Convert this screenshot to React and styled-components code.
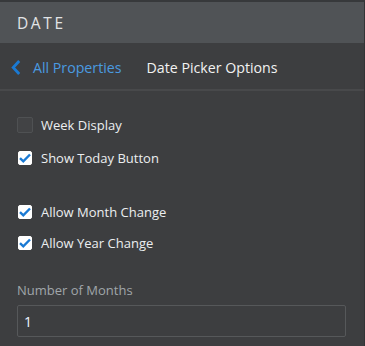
import React from "react";
import styled, { createGlobalStyle } from "styled-components";

const Global = createGlobalStyle`
  html, body { margin: 0; padding: 0; background: #3d3e40; }
  body { font-family: "Open Sans", "Noto Sans", sans-serif; }
  * { box-sizing: border-box; }
`;

const Panel = styled.div`
  width: 365px;
  height: 346px;
  background: #3d3e40;
  border-top: 2px solid #37393b;
  border-right: 1px solid #333436;
  overflow: hidden;
`;

const Header = styled.div`
  height: 41px;
  background: #505356;
  display: flex;
  align-items: center;
  padding-left: 17px;
  padding-top: 1px;
  color: #e2e4e6;
  font-size: 15.5px;
  letter-spacing: 2.6px;
`;

const Nav = styled.div`
  height: 48px;
  display: flex;
  align-items: center;
  padding-left: 11px;
  padding-top: 2px;
  border-bottom: 2px solid #48494b;
  font-size: 14.2px;
`;

const Back = styled.span`
  display: flex;
  align-items: center;
  color: #4a9be0;
  gap: 12px;
`;

const Title = styled.span`
  color: #f2f2f2;
  margin-left: 25px;
`;

const Body = styled.div`
  padding: 26px 17px 0 17px;
  display: flex;
  flex-direction: column;
`;

const Group = styled.div`
  display: flex;
  flex-direction: column;
  gap: ${(p) => p.$gap}px;
  margin-bottom: ${(p) => p.$mb || 0}px;
`;

const Row = styled.label`
  display: flex;
  align-items: center;
  gap: 8px;
  color: #eceef0;
  font-size: 13px;
  height: 16px;
`;

const Slot = styled.span`
  width: 16px;
  height: 16px;
  display: flex;
  align-items: center;
  justify-content: center;
`;

const Box = styled.span`
  width: ${(p) => (p.$checked ? 14 : 16)}px;
  height: ${(p) => (p.$checked ? 14 : 16)}px;
  border-radius: 2px;
  display: flex;
  align-items: center;
  justify-content: center;
  background: ${(p) => (p.$checked ? "#ffffff" : "#424345")};
  border: 1px solid ${(p) => (p.$checked ? "#ffffff" : "#4f5153")};
`;

const Label = styled.div`
  color: #a0a6aa;
  font-size: 13px;
  margin-bottom: 6px;
`;

const Input = styled.div`
  width: 329px;
  height: 32px;
  border: 1px solid #56585a;
  border-radius: 2px;
  display: flex;
  align-items: center;
  padding-left: 6px;
  color: #eef6ff;
  font-size: 14px;
`;

const Check = ({ checked, children }) => (
  <Row>
    <Slot>
      <Box $checked={checked}>
        {checked && (
          <svg width="12" height="10" viewBox="0 0 12 10">
            <path d="M1 5.2 L4.3 8.3 L11 1.5" fill="none" stroke="#1a7ad4" strokeWidth="2.4" />
          </svg>
        )}
      </Box>
    </Slot>
    {children}
  </Row>
);

export default function App() {
  return (
    <>
      <Global />
      <Panel>
        <Header>DATE</Header>
        <Nav>
          <Back>
            <svg width="10" height="15" viewBox="0 0 10 15">
              <path d="M8.2 1 L2.2 7.5 L8.2 14" fill="none" stroke="#1a7ad4" strokeWidth="2.8" />
            </svg>
            All Properties
          </Back>
          <Title>Date Picker Options</Title>
        </Nav>
        <Body>
          <Group $gap={17} $mb={38}>
            <Check checked={false}>Week Display</Check>
            <Check checked>Show Today Button</Check>
          </Group>
          <Group $gap={15} $mb={30}>
            <Check checked>Allow Month Change</Check>
            <Check checked>Allow Year Change</Check>
          </Group>
          <Label>Number of Months</Label>
          <Input>1</Input>
        </Body>
      </Panel>
    </>
  );
}
